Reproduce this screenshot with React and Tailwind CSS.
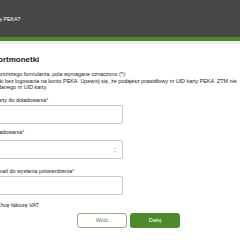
export default function App() {
    return (
        <div className="w-[240px] h-[240px] overflow-hidden bg-white font-['Liberation_Sans',Arial,sans-serif] text-[#222]">
            <header className="h-[37px] bg-[#48484a] flex items-center pt-[2px]">
                <span className="text-white text-[5.3px] -ml-[1px]">ę PEKA?</span>
            </header>
            <div className="h-[4px] bg-[#4a8a2b]" />
            <div className="h-[3px] bg-[#eef1ee]" />
            <main className="-ml-[2px]">
                <h1 className="mt-[11px] text-[8px] leading-[10px] font-bold whitespace-nowrap">ortmonetki</h1>
                <p className="mt-[6px] text-[5.4px] leading-[6.5px] whitespace-nowrap">
                    onizszego formularza, pola wymagane oznaczono (*):
                    <br />
                    tki bez logowania na konto PEKA. Upewnij się, że podajesz prawidłowy nr UID karty PEKA. ZTM nie
                    <br />
                    danego nr UID karty.
                </p>
                <label className="block mt-[6px] text-[5.4px] leading-[7px] whitespace-nowrap">
                    arty do doładowania<span className="text-[#d9262c]">*</span>
                </label>
                <div className="mt-[1.5px] -ml-[9px] w-[134px] h-[19px] border border-[#c9c9c9] rounded-[2px]" />
                <label className="block mt-[4.5px] text-[5.4px] leading-[7px] whitespace-nowrap">
                    ładowania<span className="text-[#d9262c]">*</span>
                </label>
                <div className="mt-[4.5px] -ml-[9px] w-[134px] h-[19px] border border-[#c9c9c9] rounded-[2px] flex items-center justify-end pr-[5px]">
                    <svg width="4" height="6" viewBox="0 0 4 6" className="text-[#b5b5b5]">
                        <path d="M0.5 2.2 L2 0.7 L3.5 2.2 M0.5 3.8 L2 5.3 L3.5 3.8" fill="none" stroke="currentColor" strokeWidth="0.8" />
                    </svg>
                </div>
                <label className="block mt-[8.5px] text-[5.4px] leading-[7px] whitespace-nowrap">
                    mail do wysłania potwierdzenia<span className="text-[#d9262c]">*</span>
                </label>
                <div className="mt-[1.5px] -ml-[9px] w-[134px] h-[19px] border border-[#c9c9c9] rounded-[2px]" />
                <div className="mt-[6.5px] -ml-[1px] text-[5.4px] leading-[7px] whitespace-nowrap">
                    Chcę fakturę VAT
                </div>
                <div className="mt-[4.5px] ml-[79px] flex gap-[3px]">
                    <button className="w-[50px] h-[15px] rounded-[3px] border border-[#8fae7f] bg-white text-[#4a8a2b] text-[5.5px]">
                        Wróć
                    </button>
                    <button className="w-[50px] h-[15px] rounded-[3px] bg-[#4a8a2b] text-white text-[5.5px]">
                        Dalej
                    </button>
                </div>
            </main>
        </div>
    )
}
